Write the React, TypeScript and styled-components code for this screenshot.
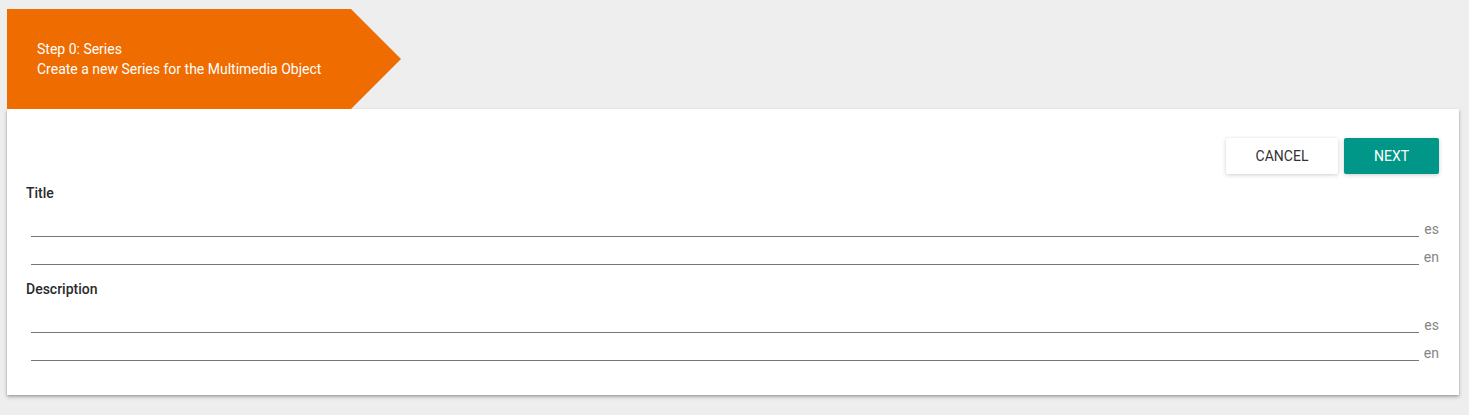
import React from "react";
import styled, { createGlobalStyle } from "styled-components";

const Global = createGlobalStyle`
  html, body { margin: 0; padding: 0; background: #eeeeee; }
  body { font-family: Roboto, "Noto Sans", Arial, sans-serif; }
  * { box-sizing: border-box; }
`;

const Page = styled.div`
  padding: 9px 10px 20px 7px;
`;

const Banner = styled.div`
  width: 394px;
  height: 100px;
  background: #ef6c00;
  clip-path: polygon(0 0, 344px 0, 394px 50px, 344px 100px, 0 100px);
  display: flex;
  flex-direction: column;
  justify-content: center;
  padding-left: 30px;
  color: #ffffff;
  font-size: 14px;
  line-height: 20px;
`;

const Card = styled.div`
  background: #ffffff;
  box-shadow: 0 2px 4px rgba(0, 0, 0, 0.25), 0 1px 2px rgba(0, 0, 0, 0.15);
  padding: 29px 20px 34px 19px;
`;

const Toolbar = styled.div`
  display: flex;
  justify-content: flex-end;
  gap: 6px;
`;

const Button = styled.button<{ $primary?: boolean }>`
  height: 36px;
  min-width: ${(p) => (p.$primary ? "95px" : "112px")};
  border: none;
  border-radius: 2px;
  font-family: Roboto, Arial, sans-serif;
  font-size: 14px;
  letter-spacing: 0;
  text-transform: uppercase;
  cursor: pointer;
  background: ${(p) => (p.$primary ? "#009688" : "#ffffff")};
  color: ${(p) => (p.$primary ? "#ffffff" : "#333333")};
  box-shadow: 0 1px 4px rgba(0, 0, 0, 0.2);
`;

const Section = styled.div<{ $first?: boolean }>`
  margin-top: ${(p) => (p.$first ? "11px" : "16px")};
`;

const Label = styled.div`
  font-size: 14px;
  font-weight: 500;
  line-height: 16px;
  color: #2b2b2b;
  margin-bottom: 8px;
`;

const Row = styled.div`
  display: flex;
  align-items: flex-end;
  height: 28px;
`;

const Input = styled.input`
  flex: 1;
  margin-left: 5px;
  height: 28px;
  border: none;
  border-bottom: 1px solid #767676;
  outline: none;
  background: transparent;
  font-family: Roboto, Arial, sans-serif;
  font-size: 14px;
  padding: 0;
`;

const Lang = styled.span`
  width: 20px;
  text-align: right;
  font-size: 14px;
  line-height: 16px;
  color: #858585;
`;

const fields = ["Title", "Description"];
const langs = ["es", "en"];

export default function App() {
  return (
    <>
      <Global />
      <Page>
        <Banner>
          <div>Step 0: Series</div>
          <div>Create a new Series for the Multimedia Object</div>
        </Banner>
        <Card>
          <Toolbar>
            <Button>Cancel</Button>
            <Button $primary>Next</Button>
          </Toolbar>
          {fields.map((f, i) => (
            <Section key={f} $first={i === 0}>
              <Label>{f}</Label>
              {langs.map((l) => (
                <Row key={l}>
                  <Input />
                  <Lang>{l}</Lang>
                </Row>
              ))}
            </Section>
          ))}
        </Card>
      </Page>
    </>
  );
}
